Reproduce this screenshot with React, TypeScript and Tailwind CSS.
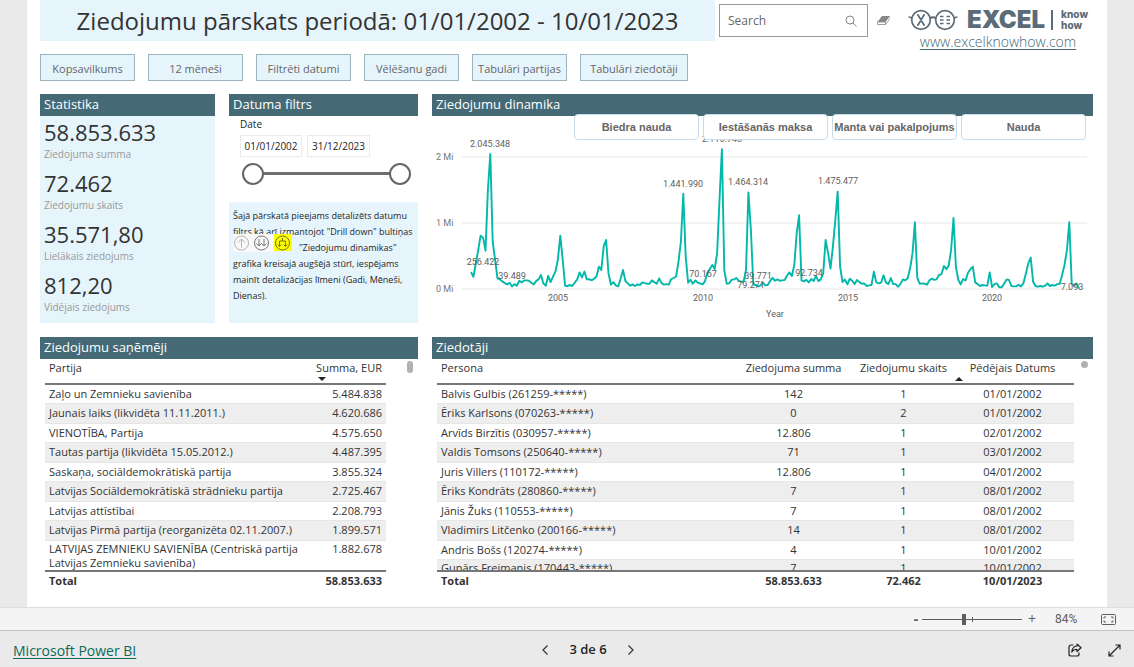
import { useState } from "react";

const NAV_ITEMS = [
  "Kopsavilkums",
  "12 mēneši",
  "Filtrēti datumi",
  "Vēlēšanu gadi",
  "Tabulāri partijas",
  "Tabulāri ziedotāji",
];

const STATS = [
  { value: "58.853.633", label: "Ziedojuma summa" },
  { value: "72.462", label: "Ziedojumu skaits" },
  { value: "35.571,80", label: "Lielākais ziedojums" },
  { value: "812,20", label: "Vidējais ziedojums" },
];

const DONATION_TYPES = [
  "Biedra nauda",
  "Iestāšanās maksa",
  "Manta vai pakalpojums",
  "Nauda",
];

const PARTIES = [
  ["Zaļo un Zemnieku savienība", "5.484.838"],
  ["Jaunais laiks (likvidēta 11.11.2011.)", "4.620.686"],
  ["VIENOTĪBA, Partija", "4.575.650"],
  ["Tautas partija (likvidēta 15.05.2012.)", "4.487.395"],
  ["Saskaņa, sociāldemokrātiskā partija", "3.855.324"],
  ["Latvijas Sociāldemokrātiskā strādnieku partija", "2.725.467"],
  ["Latvijas attīstībai", "2.208.793"],
  ["Latvijas Pirmā partija (reorganizēta 02.11.2007.)", "1.899.571"],
];

const DONORS = [
  ["Balvis Gulbis (261259-*****)", "142", "1", "01/01/2002"],
  ["Ēriks Karlsons (070263-*****)", "0", "2", "01/01/2002"],
  ["Arvīds Birzītis (030957-*****)", "12.806", "1", "02/01/2002"],
  ["Valdis Tomsons (250640-*****)", "71", "1", "03/01/2002"],
  ["Juris Villers (110172-*****)", "12.806", "1", "04/01/2002"],
  ["Ēriks Kondrāts (280860-*****)", "7", "1", "08/01/2002"],
  ["Jānis Žuks (110553-*****)", "7", "1", "08/01/2002"],
  ["Vladimirs Litčenko (200166-*****)", "14", "1", "08/01/2002"],
  ["Andris Bošs (120274-*****)", "4", "1", "10/01/2002"],
];

const LAST_DONOR = ["Gunārs Freimanis (170443-*****)", "7", "1", "10/01/2002"];

// donations per month in thousands, starting with January 2002
const MONTHLY = [
  256, 187, 380, 590, 808, 778, 580, 1500, 2045, 717, 440, 160,
  145, 115, 90, 70, 95, 39, 75, 50, 125, 100, 130, 130,
  125, 95, 70, 120, 145, 212, 85, 50, 200, 105, 187, 262,
  440, 808, 440, 50, 45, 60, 45, 95, 145, 250, 175, 265,
  145, 150, 130, 155, 187, 338, 288, 650, 742, 237, 65, 105,
  55, 40, 156, 288, 121, 85, 50, 70, 45, 70, 60, 100,
  90, 80, 80, 130, 105, 80, 160, 90, 65, 75, 65, 150,
  166, 190, 415, 717, 1442, 490, 95, 140, 80, 130, 95, 85,
  70, 120, 247, 303, 363, 303, 540, 1350, 2116, 288, 80, 85,
  140, 146, 166, 125, 110, 110, 288, 1464, 894, 70, 60, 40,
  50, 95, 55, 60, 120, 170, 125, 146, 125, 130, 136, 200,
  252, 197, 363, 843, 1116, 130, 115, 140, 100, 150, 120, 200,
  120, 146, 237, 742, 540, 308, 640, 1045, 1475, 338, 105, 146,
  70, 156, 125, 75, 136, 105, 80, 85, 45, 55, 60, 262,
  100, 85, 95, 207, 100, 75, 166, 75, 75, 35, 75, 146,
  130, 166, 313, 540, 1010, 170, 80, 85, 80, 65, 130, 156,
  140, 146, 212, 222, 350, 298, 358, 590, 1075, 338, 136, 70,
  150, 130, 247, 298, 338, 100, 75, 45, 60, 55, 50, 252,
  30, 75, 85, 25, 25, 85, 146, 136, 45, 40, 40, 65,
  40, 90, 237, 388, 474, 110, 45, 35, 45, 35, 50, 85,
  45, 60, 50, 75, 75, 212, 363, 590, 1010, 85, 45, 85,
  7,
];

const POINTS = MONTHLY.map(
  (v, i) => `${(39 + (i * 579) / 240).toFixed(1)},${(173 - v * 0.066).toFixed(1)}`
).join(" ");

const POINT_LABELS = [
  { x: 58, y: 31, text: "2.045.348" },
  { x: 51, y: 149, text: "256.422" },
  { x: 80, y: 163, text: "39.489" },
  { x: 251, y: 71, text: "1.441.990" },
  { x: 290, y: 26, text: "2.115.740" },
  { x: 316, y: 69, text: "1.464.314" },
  { x: 271, y: 161, text: "70.167" },
  { x: 326, y: 163, text: "39.771" },
  { x: 319, y: 172, text: "79.271" },
  { x: 377, y: 160, text: "92.734" },
  { x: 406, y: 68, text: "1.475.477" },
  { x: 640, y: 174, text: "7.093" },
];

const PanelTitle: React.FC<{ children: string }> = ({ children }) => (
  <h2 className="h-[22px] bg-[#456a75] pl-1 text-[13px] leading-5 text-white">
    {children}
  </h2>
);

const Logo = () => (
  <div className="flex h-10 flex-col items-center text-[#5b6b77]">
    <div className="flex h-[22px] items-center">
      <svg width="50" height="22" viewBox="0 0 50 22" fill="none" stroke="currentColor" strokeWidth="1.7">
        <circle cx="13" cy="11" r="9.3" />
        <circle cx="37" cy="11" r="9.3" />
        <path d="M22 9.5q3-2.5 6 0M3.8 9.5Q3 8 .5 8M46.2 9.5Q47 8 49.5 8" />
        <path d="M10 6l6 10M16 6l-6 10M9 6h2M15 6h2M9 16h2M15 16h2" />
        <path d="M32 7.5h3.5M38.5 7.5H42M32 11h3.5M38.5 11H42M32 14.5h3.5M38.5 14.5H42" />
      </svg>
      <span className="ml-[9px] font-[Inter] text-[24px] leading-[22px] font-black">EXCEL</span>
      <span className="ml-1.5 h-5 w-[2px] bg-[#5b6b77]" />
      <span className="ml-2 font-[Inter] text-[10px] leading-[11px] font-extrabold">
        know
        <br />
        how
      </span>
    </div>
    <a
      href="https://www.excelknowhow.com"
      className="text-[14px] leading-[22px] font-light text-[#456a75] underline underline-offset-2"
    >
      www.excelknowhow.com
    </a>
  </div>
);

const DateFilter = () => {
  const [from, setFrom] = useState(0);
  const [to, setTo] = useState(100);

  return (
    <div className="pr-[7px] pl-[11px] text-[10px] text-[#252423]">
      <div className="h-[19px] leading-4">Date</div>
      <div className="flex gap-[5px]">
        <input
          aria-label="Date from"
          defaultValue="01/01/2002"
          className="h-[22px] w-[62px] border border-[#eaeaea] text-center"
        />
        <input
          aria-label="Date to"
          defaultValue="31/12/2023"
          className="h-[22px] w-[63px] border border-[#eaeaea] text-center"
        />
      </div>
      <div className="relative mt-1.5 ml-0.5 h-[22px]">
        <div className="absolute inset-x-2 top-[9px] h-[3px] bg-[#6e6e6e]" />
        <input
          type="range"
          aria-label="Start of period"
          value={from}
          onChange={(e) => setFrom(Math.min(Number(e.target.value), to))}
          className="pointer-events-none absolute inset-0 h-[22px] w-full appearance-none bg-transparent [&::-webkit-slider-thumb]:pointer-events-auto [&::-webkit-slider-thumb]:size-[22px] [&::-webkit-slider-thumb]:appearance-none [&::-webkit-slider-thumb]:rounded-full [&::-webkit-slider-thumb]:border-2 [&::-webkit-slider-thumb]:border-[#666] [&::-webkit-slider-thumb]:bg-white"
        />
        <input
          type="range"
          aria-label="End of period"
          value={to}
          onChange={(e) => setTo(Math.max(Number(e.target.value), from))}
          className="pointer-events-none absolute inset-0 h-[22px] w-full appearance-none bg-transparent [&::-webkit-slider-thumb]:pointer-events-auto [&::-webkit-slider-thumb]:size-[22px] [&::-webkit-slider-thumb]:appearance-none [&::-webkit-slider-thumb]:rounded-full [&::-webkit-slider-thumb]:border-2 [&::-webkit-slider-thumb]:border-[#666] [&::-webkit-slider-thumb]:bg-white"
        />
      </div>
    </div>
  );
};

const HelpText = () => (
  <div className="relative h-[121px] bg-[#e6f5fb] pt-1.5 pl-1 text-[9px] leading-4 whitespace-nowrap text-[#252423]">
    <p>Šajā pārskatā pieejams detalizēts datumu</p>
    <p>filtrs kā arī izmantojot "Drill down" bultiņas</p>
    <p className="pl-[66px]">"Ziedojumu dinamikas"</p>
    <p>grafika kreisajā augšējā stūrī, iespējams</p>
    <p>mainīt detalizācijas līmeni (Gadi, Mēneši,</p>
    <p>Dienas).</p>
    <svg className="absolute top-8 left-1" width="60" height="18" viewBox="0 0 60 18" fill="none">
      <rect width="41" height="18" fill="#f8f8f8" />
      <rect x="41" width="18" height="17" fill="#ff0" />
      <g stroke="#b5b5b5">
        <circle cx="8.5" cy="9" r="7" />
        <path d="M8.500 13.500V5M5 8.500 8.500 5 12 8.500" />
      </g>
      <g stroke="#777">
        <circle cx="28.500" cy="9" r="7" />
        <path d="M26 5v7M31 5v7M23.500 9.500 26 12l2.500-2.500L31 12l2.500-2.500" />
      </g>
      <g stroke="#77770a">
        <circle cx="49.500" cy="9" r="7" />
        <path d="M46.500 12.500V7h6v5.500M49.500 7V4M44.500 10.500l2 2 2-2M50.500 10.500l2 2 2-2" />
      </g>
    </svg>
  </div>
);

const DonationChart = () => (
  <div className="relative">
    <svg
      className="block w-full"
      viewBox="0 0 661 207"
      fontFamily="Roboto, sans-serif"
      fontSize="9"
      fill="#605e5c"
      role="img"
      aria-label="Ziedojumu dinamika"
    >
      <path d="M30 41h625M30 107h625M30 173h625" stroke="#f3f3f3" strokeWidth="2" />
      <g fill="#777">
        <text x="4" y="44">2 Mi</text>
        <text x="4" y="110">1 Mi</text>
        <text x="4" y="176">0 Mi</text>
      </g>
      <polyline points={POINTS} fill="none" stroke="#01b8aa" strokeWidth="1.900" strokeLinejoin="round" />
      <g textAnchor="middle">
        {POINT_LABELS.map((l) => (
          <text key={l.text} x={l.x} y={l.y}>
            {l.text}
          </text>
        ))}
        <text x="126" y="185">2005</text>
        <text x="271" y="185">2010</text>
        <text x="416" y="185">2015</text>
        <text x="560" y="185">2020</text>
        <text x="343" y="201">Year</text>
      </g>
    </svg>
    <div className="absolute -top-[2px] right-[7px] left-[142px] grid grid-cols-4 gap-1">
      {DONATION_TYPES.map((type) => (
        <button
          key={type}
          className="h-[26px] rounded-[4px] border border-[#c7dced] bg-white font-[Liberation_Sans] text-[11px] font-bold whitespace-nowrap text-[#666]"
        >
          {type}
        </button>
      ))}
    </div>
  </div>
);

const rowClass = (i: number) =>
  i % 2 ? "h-5 border-y border-[#e6e6e6] bg-[#eee]" : "h-[19px]";

const PartyTable = () => (
  <div className="flex items-start justify-between pr-[5px] pl-[5px]">
    <table className="w-[341px] border-collapse text-[11px] leading-[14px] text-[#333]">
      <thead>
        <tr className="h-[25px] border-b-2 border-[#777] align-top">
          <th className="pt-0.5 pl-1 text-left font-normal">Partija</th>
          <th className="relative w-[73px] pt-0.5 pr-1 text-right font-normal whitespace-nowrap">
            Summa, EUR
            <span className="absolute bottom-[2px] left-[5px] border-x-4 border-t-4 border-x-transparent border-t-[#222]" />
          </th>
        </tr>
      </thead>
      <tbody>
        {PARTIES.map(([name, sum], i) => (
          <tr key={name} className={rowClass(i)}>
            <td className="pl-1">{name}</td>
            <td className="pr-1 text-right">{sum}</td>
          </tr>
        ))}
        <tr className="align-top">
          <td className="pl-1">
            <div className="h-[29px] overflow-hidden pt-px">
              LATVIJAS ZEMNIEKU SAVIENĪBA (Centriskā partija
              <br />
              Latvijas Zemnieku savienība)
            </div>
          </td>
          <td className="pt-px pr-1 text-right">1.882.678</td>
        </tr>
      </tbody>
      <tfoot>
        <tr className="h-5 border-t-2 border-[#777] font-bold">
          <td className="pl-1">Total</td>
          <td className="pr-1 text-right">58.853.633</td>
        </tr>
      </tfoot>
    </table>
    <div className="mt-0.5 h-3 w-1.5 rounded-full bg-[#b3b0ad]" />
  </div>
);

const DonorTable = () => (
  <div className="flex items-start gap-[7px] pr-[5px] pl-[5px]">
    <table className="flex-1 table-fixed border-collapse text-center text-[11px] leading-[14px] whitespace-nowrap text-[#333]">
      <colgroup>
        <col />
        <col className="w-[125px]" />
        <col className="w-[95px]" />
        <col className="w-[123px]" />
      </colgroup>
      <thead>
        <tr className="h-[25px] border-b-2 border-[#777] align-top">
          <th className="pt-0.5 pl-1 text-left font-normal">Persona</th>
          <th className="pt-0.5 font-normal">Ziedojuma summa</th>
          <th className="pt-0.5 font-normal">Ziedojumu skaits</th>
          <th className="relative pt-0.5 font-normal">
            Pēdējais Datums
            <span className="absolute bottom-[2px] left-1 border-x-4 border-b-4 border-x-transparent border-b-[#222]" />
          </th>
        </tr>
      </thead>
      <tbody>
        {DONORS.map(([name, sum, count, date], i) => (
          <tr key={name} className={rowClass(i)}>
            <td className="pl-1 text-left">{name}</td>
            <td>{sum}</td>
            <td>{count}</td>
            <td>{date}</td>
          </tr>
        ))}
        <tr className="border-t border-[#e6e6e6] bg-[#eee]">
          {LAST_DONOR.map((cell, i) => (
            <td key={i} className={i === 0 ? "pl-1 text-left" : ""}>
              <div className="h-[10px] overflow-hidden pt-px">{cell}</div>
            </td>
          ))}
        </tr>
      </tbody>
      <tfoot>
        <tr className="h-5 border-t-2 border-[#777] font-bold">
          <td className="pl-1 text-left">Total</td>
          <td>58.853.633</td>
          <td>72.462</td>
          <td>10/01/2023</td>
        </tr>
      </tfoot>
    </table>
    <div className="mt-0.5 size-[7px] rounded-full bg-[#b3b0ad]" />
  </div>
);

const ZoomBar = () => {
  const [zoom, setZoom] = useState(84);

  return (
    <div className="flex h-6 items-center justify-end border-y border-t-[#dedede] border-b-[#c4c4c4] bg-[#f4f4f4] pr-[18px] text-[12px] text-[#605e5c]">
      <button aria-label="Zoom out" className="w-3 text-[14px] leading-4 font-bold">-</button>
      <div className="relative flex h-4 w-[100px] items-center">
        <div className="absolute inset-x-0 h-px bg-[#605e5c]" />
        <div className="absolute left-[50px] h-[5px] w-px bg-[#605e5c]" />
        <input
          type="range"
          min={0}
          max={200}
          aria-label="Zoom"
          value={zoom}
          onChange={(e) => setZoom(Number(e.target.value))}
          className="relative h-4 w-full appearance-none bg-transparent [&::-webkit-slider-thumb]:h-[11px] [&::-webkit-slider-thumb]:w-1 [&::-webkit-slider-thumb]:appearance-none [&::-webkit-slider-thumb]:bg-[#605e5c]"
        />
      </div>
      <button aria-label="Zoom in" className="w-5 text-[14px] leading-4">+</button>
      <span className="ml-[13px] w-6 font-[Roboto]">{zoom}%</span>
      <button aria-label="Fit to page" className="ml-[22px]">
        <svg width="15" height="11" viewBox="0 0 15 11" fill="none" stroke="#605e5c">
          <rect x=".5" y=".5" width="14" height="10" rx="1" />
          <path d="M3 4.500v-1.500h2M10 3h2v1.500M12 6.500V8h-2M5 8H3V6.500" />
        </svg>
      </button>
    </div>
  );
};

const Footer = () => (
  <footer className="grid h-9 grid-cols-3 items-center pt-0.5 pr-[13px] pl-[13px] text-[14px]">
    <a href="https://powerbi.microsoft.com" className="justify-self-start text-[#0b6a5c] underline underline-offset-2">
      Microsoft Power BI
    </a>
    <div className="flex items-center justify-center gap-[21px] pl-[42px] text-[13px] font-semibold whitespace-nowrap text-[#252423]">
      <button aria-label="Previous page">
        <svg width="6" height="10" viewBox="0 0 6 10" fill="none" stroke="#333" strokeWidth="1.200">
          <path d="M5.500.5 1 5l4.500 4.500" />
        </svg>
      </button>
      <span>3 de 6</span>
      <button aria-label="Next page">
        <svg width="6" height="10" viewBox="0 0 6 10" fill="none" stroke="#333" strokeWidth="1.200">
          <path d="M.5.5 5 5 .5 9.500" />
        </svg>
      </button>
    </div>
    <div className="flex items-center justify-end gap-[26px]">
      <button aria-label="Share">
        <svg width="14" height="14" viewBox="0 0 14 14" fill="none" stroke="#222" strokeWidth="1.200">
          <path d="M5.500 2H3a2 2 0 0 0-2 2v7a2 2 0 0 0 2 2h6a2 2 0 0 0 2-2V9.500" />
          <path d="M9 1l4 3.700L9 8.500V6.500C6.500 6.300 5 7 3.800 9 4 5.500 6 3.300 9 3z" strokeLinejoin="round" />
        </svg>
      </button>
      <button aria-label="Full screen">
        <svg width="13" height="13" viewBox="0 0 13 13" fill="none" stroke="#222" strokeWidth="1.200">
          <path d="M1 12 12 1M7.500 1H12v4.500M1 7.500V12h4.500" />
        </svg>
      </button>
    </div>
  </footer>
);

export default function App() {
  return (
    <div className="flex min-h-screen flex-col bg-[#eaeaea] font-['Open_Sans','Noto_Sans',sans-serif]">
      <main className="mx-[27px] flex-1 bg-white pr-[14px] pb-3 pl-[13px]">
        <header className="flex items-start">
          <h1 className="h-[41px] flex-1 bg-[#e6f5fb] text-center text-[24px] leading-[42px] whitespace-nowrap text-[#333]">
            Ziedojumu pārskats periodā: 01/01/2002 - 10/01/2023
          </h1>
          <label className="mt-1 ml-1 flex h-[33px] w-[149px] items-center border border-[#999] pr-2.5 pl-2">
            <input
              type="search"
              placeholder="Search"
              aria-label="Search"
              className="min-w-0 flex-1 text-[12px] outline-none placeholder:text-[#666]"
            />
            <svg width="12" height="12" viewBox="0 0 12 12" fill="none" stroke="#888">
              <circle cx="5" cy="5" r="4" />
              <path d="M8 8l3.500 3.500" />
            </svg>
          </label>
          <button aria-label="Clear search" className="ml-2 flex h-10 w-[15px] items-center justify-center">
            <svg width="13" height="9" viewBox="0 0 13 9">
              <path d="M5 0h8L8.500 6h-8z" fill="#888" />
              <path d="M.5 6h8v2.500h-8zM8.500 8.500 13 2.500V.5" fill="#fff" stroke="#888" strokeWidth=".800" />
            </svg>
          </button>
          <div className="-mb-2 ml-3 w-[190px] pt-[9px]">
            <Logo />
          </div>
        </header>

        <nav className="mt-[13px] flex gap-[13px]">
          {NAV_ITEMS.map((item) => (
            <button
              key={item}
              className="h-[27px] w-[95px] border border-[#9bb4bf] bg-[#e6f5fb] pt-[3px] text-[11px] whitespace-nowrap text-[#666] last:w-[108px]"
            >
              {item}
            </button>
          ))}
        </nav>

        <div className="mt-[13px] grid grid-cols-[175fr_189fr_661fr] gap-[14px]">
          <section className="bg-[#e6f5fb]">
            <PanelTitle>Statistika</PanelTitle>
            <dl className="pl-1">
              {STATS.map((s) => (
                <div key={s.label} className="flex h-[51px] flex-col">
                  <dt className="order-2 text-[10px] leading-[14px] text-[#999]">{s.label}</dt>
                  <dd className="pt-px text-[22px] leading-[30px] text-[#333]">{s.value}</dd>
                </div>
              ))}
            </dl>
          </section>
          <section className="flex flex-col justify-between">
            <div>
              <PanelTitle>Datuma filtrs</PanelTitle>
              <DateFilter />
            </div>
            <HelpText />
          </section>
          <section>
            <PanelTitle>Ziedojumu dinamika</PanelTitle>
            <DonationChart />
          </section>
        </div>

        <div className="mt-[14px] grid grid-cols-[378fr_661fr] gap-[14px]">
          <section>
            <PanelTitle>Ziedojumu saņēmēji</PanelTitle>
            <PartyTable />
          </section>
          <section>
            <PanelTitle>Ziedotāji</PanelTitle>
            <DonorTable />
          </section>
        </div>
      </main>
      <ZoomBar />
      <Footer />
    </div>
  );
}
